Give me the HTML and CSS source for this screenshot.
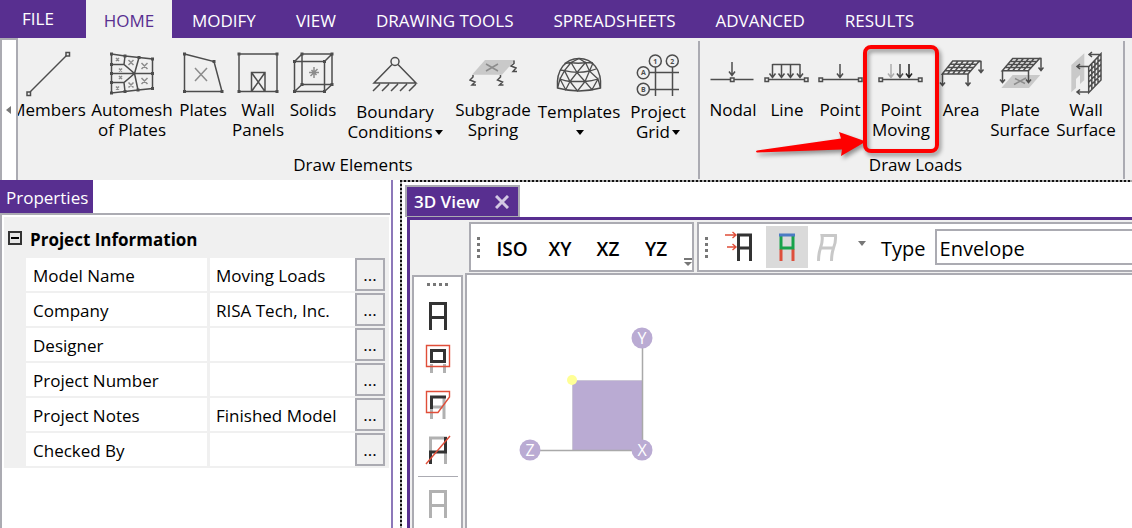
FILE: index.html
```html
<!DOCTYPE html>
<html lang="en">
<head>
<meta charset="utf-8">
<meta name="viewport" content="width=device-width, initial-scale=1">
<title>3D View</title>
<link rel="stylesheet" href="styles.css">
</head>
<body>
<svg class="defs" aria-hidden="true">
  <defs>
    <symbol id="down" viewBox="0 0 8 16" overflow="visible"><path d="M4 0V13M1 9.500L4 13.500L7 9.500"/></symbol>
    <symbol id="frame-a" viewBox="0 0 31 45"><path d="M8.500 37V10.500H23.500V37M8.500 24.500H23.500"/></symbol>
  </defs>
</svg>
<div class="app">
  <nav class="tabs" aria-label="Ribbon tabs">
    <button class="tab tab-file">FILE</button>
    <button class="tab tab-home active">HOME</button>
    <button class="tab">MODIFY</button>
    <button class="tab">VIEW</button>
    <button class="tab">DRAWING TOOLS</button>
    <button class="tab">SPREADSHEETS</button>
    <button class="tab">ADVANCED</button>
    <button class="tab">RESULTS</button>
  </nav>

  <div class="ribbon">
    <button class="ribbon-scroll" aria-label="Scroll ribbon left"><svg width="6" height="8" viewBox="0 0 6 8"><path d="M5 0V8L0 4Z"/></svg></button>

    <section class="group group-elements">
      <div class="tools tools-elements">
        <button class="tool">
          <svg class="icon" viewBox="0 0 48 48"><path d="M6 42L42.500 5.500"/><path class="node" d="M3 42h3.500v3.500H3zM42 2.500h3.500V6H42z"/></svg>
          <span class="label">Members</span>
        </button>
        <button class="tool">
          <svg class="icon" viewBox="0 0 48 48"><path d="M3.500 4L17 6L31 7.500L44.500 9V38.500L30 40L17 41.500L3.500 43ZM3.500 23.500H44.500M3.500 14.500H16L26.500 23.500L16 32.500H3.500M17 6L16 14.500M31 7.500L26.500 23.500L30 40M16 32.500L17 41.500"/><path class="dots" d="M3.500 4h0M17 6h0M31 7.500h0M44.500 9h0M44.500 23.500h0M44.500 38.500h0M30 40h0M17 41.500h0M3.500 43h0M3.500 32.500h0M3.500 23.500h0M3.500 14.500h0"/><path class="soft" d="M8 8l3 3m0-3l-3 3M20.500 10l5 5m0-5l-5 5M33.500 13l6 6m0-6l-6 6M11 18.500l3 3m0-3l-3 3M11 26l3 3m0-3l-3 3M8 36.500l3 3m0-3l-3 3M20.500 32.500l5 5m0-5l-5 5M33.500 28l6 6m0-6l-6 6"/></svg>
          <span class="label">Automesh<br>of Plates</span>
        </button>
        <button class="tool">
          <svg class="icon" viewBox="0 0 48 48"><path d="M5.500 4L35 11.500L43 41.500H5.500Z"/><path class="dots" d="M5.500 4h0M35 11.500h0M43 41.500h0M5.500 41.500h0"/><path class="soft" d="M16 18l12 13M28 18L16 31"/></svg>
          <span class="label">Plates</span>
        </button>
        <button class="tool">
          <svg class="icon" viewBox="0 0 48 48"><path d="M5 4H43V41.500H5ZM17.500 41.500V22.500H31V41.500M17.500 22.500L31 41.500M31 22.500L17.500 41.500"/><path class="dots" d="M5 4h0M43 4h0M43 41.500h0M5 41.500h0"/></svg>
          <span class="label">Wall<br>Panels</span>
        </button>
        <button class="tool">
          <svg class="icon" viewBox="0 0 48 48"><path d="M5.500 11.500H35.500V41.500H5.500ZM13 4H43V34.500H13ZM5.500 11.500L13 4M35.500 11.500L43 4M35.500 41.500L43 34.500M5.500 41.500L13 34.500"/><path class="dots" d="M5.500 11.500h0M35.500 11.500h0M35.500 41.500h0M5.500 41.500h0M13 4h0M43 4h0M43 34.500h0M13 34.500h0"/><path class="soft" d="M25 17v11M20 22.500h10M21.500 26l7-7M22.500 20l5 5"/></svg>
          <span class="label">Solids</span>
        </button>
        <button class="tool drop">
          <svg class="icon" viewBox="0 0 48 48"><circle cx="24" cy="11.500" r="4"/><path d="M21 14.500L3 33H45L27 14.500M9 34l-7 7M18 34l-7 7M27 34l-7 7M36 34l-7 7M45 34l-7 7"/></svg>
          <span class="label">Boundary<br>Conditions<i class="caret"></i></span>
        </button>
        <button class="tool">
          <svg class="icon" viewBox="0 0 48 48"><path class="plate" d="M16 10H46L33 24.700H3Z"/><path class="soft" d="M17 14l12 7M29 14l-12 7"/><path d="M4 25v2L1 30l5 2-3 3h4M31.500 25v2L28.500 30l5 2-3 3h4M45 10.500v3L42 16l5 2-3 3.500h4"/></svg>
          <span class="label">Subgrade<br>Spring</span>
        </button>
        <button class="tool drop">
          <svg class="icon" viewBox="0 0 48 48"><path d="M2.500 38C1 19 11 8.500 24 8.500S47 19 45.500 38Q24 44 2.500 38Z"/><path class="thin" d="M2.500 38L5 29L10.700 39.700L15 31.500L22.500 41L30 31.500L37 39.700L43 29L45.500 38M5 29Q10 31 15 31.500H30Q37 31 43 29M5 29L9.500 20.700L15 31.500L22 22.500L30 31.500L34.500 21L43 29M9.500 20.700Q22 24 34.500 21L41 19M9.500 20.700L16 12.500L22 22.500L30.500 12.500L34.500 21L38 13M9.500 13.500L16 12.500L24 8.500L30.500 12.500L38 13M16 12.500Q23 14 30.500 12.500M5 20L9.500 20.700"/></svg>
          <span class="label">Templates<br><i class="caret"></i></span>
        </button>
        <button class="tool drop">
          <svg class="icon" viewBox="0 0 48 48"><circle cx="21.300" cy="11" r="6"/><circle cx="38.300" cy="11" r="6"/><circle cx="9.300" cy="22.700" r="6"/><circle cx="9.300" cy="39.300" r="6"/><path d="M21.500 17V46M38.500 17V46M15.500 22.500H45M15.500 39.500H45"/><g class="marks"><text x="21.300" y="13.500">1</text><text x="38.300" y="13.500">2</text><text x="9.300" y="25.200">A</text><text x="9.300" y="41.800">B</text></g></svg>
          <span class="label">Project<br>Grid<i class="caret"></i></span>
        </button>
      </div>
      <h2 class="group-title">Draw Elements</h2>
    </section>

    <section class="group group-loads">
      <div class="tools tools-loads">
        <button class="tool">
          <svg class="icon" viewBox="0 0 48 48"><path d="M1.500 29.500H21M25 29.500H44.500"/><path class="node" d="M21.500 28h3.500v3.500h-3.500z"/><use href="#down" x="19" y="12" width="8" height="16"/></svg>
          <span class="label">Nodal</span>
        </button>
        <button class="tool">
          <svg class="icon" viewBox="0 0 48 48"><path d="M5 29.500H42M9.500 14.500H37"/><path class="node" d="M2 28h3.500v3.500H2zM41.500 28H45v3.500h-3.500z"/><use href="#down" x="5.500" y="14" width="8" height="16"/><use href="#down" x="14.500" y="14" width="8" height="16"/><use href="#down" x="23.500" y="14" width="8" height="16"/><use href="#down" x="33" y="14" width="8" height="16"/></svg>
          <span class="label">Line</span>
        </button>
        <button class="tool">
          <svg class="icon" viewBox="0 0 48 48"><path d="M6 29.500H43"/><path class="node" d="M3 28h3.500v3.500H3zM42.500 28H46v3.500h-3.500z"/><use href="#down" x="20" y="14" width="8" height="16"/></svg>
          <span class="label">Point</span>
        </button>
        <button class="tool marked">
          <svg class="icon" viewBox="0 0 48 48"><path d="M5 29.500H42"/><path class="node" d="M2 28h3.500v3.500H2zM41.500 28H45v3.500h-3.500z"/><use class="faded" href="#down" x="10" y="14" width="8" height="16"/><use href="#down" x="19" y="14" width="8" height="16"/><use class="dark" href="#down" x="28" y="14" width="8" height="16"/></svg>
          <span class="label">Point<br>Moving</span>
          <svg class="callout" viewBox="0 0 190 120" aria-hidden="true"><rect x="111" y="7" width="72" height="104" rx="6"/><path d="M3 110.500L87 98.500L85 92L112 101.500L87 116L88 109.500L3 112.500Q1 111.500 3 110.500Z"/></svg>
        </button>
        <button class="tool">
          <svg class="icon" viewBox="0 0 48 48"><path d="M15.700 11H42.300L31 24H5.300ZM13.100 14.250H39.500M10.500 17.500H36.700M7.900 20.750H33.900M21 11L10.500 24M26.300 11L15.600 24M31.600 11L20.700 24M37 11L25.900 24"/><path d="M42 11.500H44V22M41.500 19.500L44 22.500L46.500 19.500M5.500 24V35M3 32.500L5.500 35.500L8 32.500M31 24V35M28.500 32.500L31 35.500L33.500 32.500"/></svg>
          <span class="label">Area</span>
        </button>
        <button class="tool">
          <svg class="icon" viewBox="0 0 48 48"><path class="plate" d="M16.700 25H44.300L33 38H5.300Z"/><path class="soft" d="M19 28.500l10 5M30 28l-12 6.500"/><path d="M16.700 8.500H43.500L32.300 20.700H6.300ZM14.100 11.500H40.700M11.500 14.600H37.900M8.900 17.600H35.100M22 8.500L11.500 20.700M27.400 8.500L16.700 20.700M32.700 8.500L21.900 20.700M38.100 8.500L27.100 20.700"/><path d="M43 8.500H45V20M42.500 17.500L45 20.500L47.500 17.500M6.500 20.700V32M4 29.500L6.500 32.500L9 29.500M32.500 20.700V32M30 29.500L32.500 32.500L35 29.500"/></svg>
          <span class="label">Plate<br>Surface</span>
        </button>
        <button class="tool">
          <svg class="icon" viewBox="0 0 48 48"><path class="plate" d="M9.300 15L22.300 3.300V30L18 34V25L14 29V38L9.300 42.300Z"/><path d="M26.700 16.700L39 3.700V30L26.700 42.700ZM29.800 13.500V39.500M32.900 10.200V36.300M36 7V33.100M26.700 21.900L39 9M26.700 27.100L39 14.200M26.700 32.300L39 19.500M26.700 37.500L39 24.700M39 4.500H27M30 2L27 4.500L30 7M26.700 16.500H15M18 14L15 16.500L18 19M26.700 42H15M18 39.500L15 42L18 44.500"/></svg>
          <span class="label">Wall<br>Surface</span>
        </button>
      </div>
      <h2 class="group-title">Draw Loads</h2>
    </section>
  </div>

  <main class="workspace">
    <aside class="properties">
      <h2 class="panel-tab">Properties</h2>
      <div class="panel-frame">
        <div class="panel-sheet">
          <h3 class="section"><button class="expander" aria-label="Collapse Project Information"></button>Project Information</h3>
          <table class="props">
            <colgroup><col class="col-name"><col><col class="col-more"></colgroup>
            <tr><th scope="row">Model Name</th><td>Moving Loads</td><td class="more"><button aria-label="Edit Model Name">...</button></td></tr>
            <tr><th scope="row">Company</th><td>RISA Tech, Inc.</td><td class="more"><button aria-label="Edit Company">...</button></td></tr>
            <tr><th scope="row">Designer</th><td></td><td class="more"><button aria-label="Edit Designer">...</button></td></tr>
            <tr><th scope="row">Project Number</th><td></td><td class="more"><button aria-label="Edit Project Number">...</button></td></tr>
            <tr><th scope="row">Project Notes</th><td>Finished Model</td><td class="more"><button aria-label="Edit Project Notes">...</button></td></tr>
            <tr><th scope="row">Checked By</th><td></td><td class="more"><button aria-label="Edit Checked By">...</button></td></tr>
          </table>
        </div>
      </div>
    </aside>

    <section class="dock">
      <div class="dock-inner">
        <div class="view-tab">3D View<button class="close" aria-label="Close 3D View"><svg width="14" height="14" viewBox="0 0 14 14"><path d="M1 1L13 13M13 1L1 13"/></svg></button></div>
        <div class="view">
          <div class="toolbars">
            <div class="toolbar toolbar-views">
              <span class="grip"></span>
              <button class="view-btn">ISO</button>
              <button class="view-btn">XY</button>
              <button class="view-btn">XZ</button>
              <button class="view-btn">YZ</button>
              <svg class="overflow" width="8" height="8" viewBox="0 0 8 8"><path d="M0 0H8V2H0ZM0 4H8L4 8Z"/></svg>
            </div>
            <div class="toolbar toolbar-results">
              <span class="grip"></span>
              <button class="pic" aria-label="Loads"><svg width="42" height="42" viewBox="0 0 42 42"><path class="ink" d="M14.500 35V9H26.500V35M14.500 22H26.500"/><path class="red" d="M1 9H12M8.500 6L12 9L8.500 12M3 21H12M8.500 18L12 21L8.500 24"/></svg></button>
              <button class="pic pressed" aria-label="Member colors"><svg width="42" height="42" viewBox="0 0 42 42"><path class="r" d="M15 23V35M27 23V35"/><path class="g" d="M15 9V22H27V9"/><path class="b" d="M13 9H29"/></svg></button>
              <button class="pic" aria-label="Deflected shape"><svg width="42" height="42" viewBox="0 0 42 42"><path class="mute" d="M10.500 35Q10.500 28 12.500 22Q15 15 14 9.500H27.500Q28 16 25.500 22Q23.500 28 23.500 35M12.500 22H25.500"/></svg></button>
              <svg class="menu" width="8" height="5" viewBox="0 0 8 5"><path d="M0 0H8L4 5Z"/></svg>
              <label class="type-label" for="type">Type</label>
              <select class="type-select" id="type"><option>Envelope</option></select>
            </div>
          </div>
          <div class="stage">
            <div class="sidebar">
              <span class="grip grip-wide"></span>
              <button class="side" aria-label="Select all"><svg width="31" height="45"><use class="ink" href="#frame-a"/></svg></button>
              <button class="side" aria-label="Box select"><svg width="31" height="45"><path class="gray" d="M9.500 26V35M22.500 26V35"/><path class="ink" d="M9.500 12.500H22.500V23.500H9.500Z"/><path class="red" d="M4.500 7.500H27.500V28.500H4.500Z"/></svg></button>
              <button class="side" aria-label="Polygon select"><svg width="31" height="45"><path class="gray" d="M9.500 26V36M22 14V36M11 24H22"/><path class="ink" d="M9.500 26V14H24"/><path class="red" d="M4.500 8.500H27.500V14L16 29.500H4.500Z"/></svg></button>
              <button class="side" aria-label="Line select"><svg width="31" height="45"><path class="gray" d="M8.500 24V10H23.500V36"/><path class="ink" d="M8.500 36V24H23.500V9"/><path class="red" d="M4 36L28 8"/></svg></button>
              <hr>
              <button class="side" aria-label="Unselect all"><svg width="31" height="45"><use class="gray" href="#frame-a"/></svg></button>
            </div>
            <div class="canvas">
              <svg class="gizmo" width="136" height="136" viewBox="0 0 136 136" role="img" aria-label="Axis orientation">
                <path class="face" d="M53 53H123V123H53Z"/>
                <path class="edge" d="M53.500 123V53.500H123"/>
                <path class="axis" d="M123.500 11V123.500H11"/>
                <circle class="knob" cx="123" cy="11" r="10.500"/><circle class="knob" cx="11" cy="123" r="10.500"/><circle class="knob" cx="123" cy="123" r="10.500"/>
                <circle class="origin" cx="53" cy="53" r="5"/>
                <text x="123" y="17">Y</text><text x="11" y="129">Z</text><text x="123" y="129">X</text>
              </svg>
            </div>
          </div>
        </div>
      </div>
    </section>
  </main>
</div>
</body>
</html>
```
FILE: styles.css
```css
:root {
  --purple: #582f90;
  --line: #ababb2;
  --panel: #f0f0f0;
}
* { box-sizing: border-box; }
body {
  margin: 0;
  font: 17px/20px "Open Sans", "Noto Sans", sans-serif;
  color: #000;
  background: #fff;
  overflow: hidden;
}
button {
  font: inherit;
  color: inherit;
  background: none;
  border: 0;
  padding: 0;
}
h2, h3 { margin: 0; font: inherit; }
svg { display: block; }
.defs { position: absolute; width: 0; height: 0; }
.app { display: flex; flex-direction: column; height: 100vh; }

/* Tab strip */
.tabs { display: flex; height: 38px; background: var(--purple); flex: none; }
.tab { padding: 4px 20px 0; color: #fff; white-space: nowrap; }
.tab-file, .tab-home { width: 86px; padding: 4px 0 0; }
.tab-file { padding: 0 10px 0 0; }
.active { background: var(--panel); color: var(--purple); }

/* Ribbon */
.ribbon { display: flex; height: 142px; background: var(--panel); flex: none; }
.ribbon-scroll {
  width: 18px;
  flex: none;
  display: grid;
  place-items: center;
  background: #fff;
  border: 2px solid var(--line);
  border-bottom: 0;
}
.ribbon-scroll path { fill: #777; }
.group {
  position: relative;
  display: flex;
  flex-direction: column;
  padding-top: 12px;
  flex: none;
}
.group::after {
  content: "";
  position: absolute;
  top: 3px;
  right: 0;
  bottom: 1px;
  width: 2px;
  background: var(--line);
}
.group-elements { width: 682px; padding-right: 6px; }
.group-loads { width: 425px; padding-left: 6px; }
.tools { display: grid; height: 105px; }
.tools-elements {
  grid-template-columns: 80px 88px 54px 56px 54px 110px 86px 86px 72px;
  justify-content: end;
  overflow: hidden;
}
.tools-loads { grid-template-columns: 54px 54px 52px 70px 50px 68px 64px; }
.tool {
  position: relative;
  display: flex;
  flex-direction: column;
  align-items: center;
  white-space: nowrap;
}
.icon {
  width: 48px;
  height: 48px;
  flex: none;
  fill: none;
  stroke: #4d4d4d;
  stroke-width: 1.5;
}
.icon .dots { stroke-width: 3; stroke-linecap: square; }
.icon .node { fill: var(--panel); }
.icon .soft { stroke: #8c8c8c; }
.icon .plate { fill: #c9c9c9; stroke: none; }
.icon .thin { stroke-width: 1.3; }
.icon .faded { stroke: #adadad; }
.icon .dark { stroke: #222; }
.marks text {
  font: bold 7px "Open Sans", sans-serif;
  fill: #4d4d4d;
  stroke: none;
  text-anchor: middle;
}
.label { padding-top: 2px; }
.drop .label { padding-top: 4px; }
.caret {
  display: inline-block;
  border: 4px solid transparent;
  border-top: 5px solid #000;
  border-bottom: 0;
  margin-left: 2px;
  vertical-align: 3px;
}
.callout {
  position: absolute;
  z-index: 1;
  top: -10px;
  right: -8px;
  width: 190px;
  height: 120px;
  pointer-events: none;
  filter: drop-shadow(2px 3px 2px rgba(0, 0, 0, .4));
}
.callout rect { fill: none; stroke: #fe0000; stroke-width: 4; }
.callout path { fill: #fe0000; }
.group-title { text-align: center; }
.group-elements .group-title { padding-right: 6px; }

/* Properties panel */
.workspace { display: flex; flex: 1; min-height: 0; }
.properties {
  width: 393px;
  flex: none;
  display: flex;
  flex-direction: column;
  align-items: flex-start;
  border-right: 2px solid #8d78b9;
}
.panel-tab {
  height: 33px;
  padding: 8px 5px 0 6px;
  color: #fff;
  background: var(--purple);
}
.panel-frame {
  flex: 1;
  width: 390px;
  padding: 2px 1px 0 2px;
  border: solid var(--line);
  border-width: 2px 0 0 2px;
}
.panel-sheet { background: var(--panel); padding: 0 4px 2px 22px; }
.section {
  display: flex;
  align-items: center;
  gap: 8px;
  height: 41px;
  margin-left: -18px;
  padding-top: 4px;
  font-weight: 700;
}
.expander {
  width: 14px;
  height: 14px;
  margin-top: -3px;
  border: 2px solid #333;
  background: linear-gradient(#000, #000) center / 8px 2px no-repeat #e6e6e6;
}
.props {
  width: 100%;
  table-layout: fixed;
  border-collapse: separate;
  border-spacing: 0;
}
.col-name { width: 184px; }
.col-more { width: 30px; }
.props th, .props td {
  height: 35px;
  padding: 3px 6px 0;
  background: #fff;
  border-bottom: 2px solid var(--panel);
  text-align: left;
  font-weight: 400;
  white-space: nowrap;
}
.props th { padding-left: 7px; border-right: 3px solid var(--panel); }
.props tr:last-child > * { height: 33px; border-bottom: 0; }
.props .more { padding: 0; }
.more button {
  display: block;
  width: 30px;
  height: 33px;
  border: 2px solid var(--line);
  background: var(--panel);
}

/* 3D view */
.dock {
  flex: 1;
  min-width: 0;
  margin-left: 7px;
  padding: 2px 0 0 2px;
  background:
    repeating-linear-gradient(90deg, #111 0 2px, #aaa 2px 4px) 0 0 / 100% 2px no-repeat,
    repeating-linear-gradient(#111 0 2px, #aaa 2px 4px) 0 0 / 2px 100% no-repeat;
}
.dock-inner {
  height: 100%;
  padding: 3px 0 0 5px;
  display: flex;
  flex-direction: column;
  background: #fff;
}
.view-tab {
  display: flex;
  align-items: center;
  align-self: flex-start;
  gap: 15px;
  height: 32px;
  margin-left: -2px;
  padding: 0 9px 0 7px;
  border: 2px solid var(--line);
  border-bottom-width: 1px;
  background: var(--purple);
  color: #fff;
  font-weight: 600;
}
.close path { stroke: #d3c8e3; stroke-width: 3; }
.view {
  flex: 1;
  min-height: 0;
  display: flex;
  flex-direction: column;
  border: solid var(--purple);
  border-width: 3px 0 0 3px;
  background: var(--panel);
}
.toolbars { display: flex; gap: 3px; padding: 2px 0 1px 59px; font-size: 20px; }
.toolbar {
  position: relative;
  display: flex;
  align-items: center;
  height: 50px;
  border: 2px solid var(--line);
  background: #fff;
}
.toolbar-views { width: 225px; padding-left: 6px; flex: none; }
.toolbar-results { flex: 1; padding-left: 6px; border-right: 0; min-width: 0; }
.grip {
  width: 3px;
  height: 21px;
  flex: none;
  background: repeating-linear-gradient(#777 0 3px, transparent 3px 6px);
}
.view-btn { width: 48px; height: 46px; padding-top: 3px; font-weight: 600; font-size: 19px; }
.grip + .view-btn { margin-left: 8px; }
.overflow { position: absolute; right: 0; bottom: 4px; fill: #777; }
.pic { flex: none; }
.pic svg, .side svg { fill: none; }
.grip + .pic { margin-left: 16px; }
.pressed { background: #dadada; }
.pic path { stroke-width: 3; }
.ink { stroke: #333; stroke-width: 3; }
.gray { stroke: #b1b1b1; stroke-width: 3; }
.pic .red, .side .red { stroke: #e04e39; stroke-width: 1.4; }
.r { stroke: #de4f3c; }
.g { stroke: #18a24b; }
.b { stroke: #4b7bc4; }
.mute { stroke: #c8c8c8; }
.menu { margin: 0 15px 8px 8px; fill: #777; flex: none; }
.type-label { padding-top: 4px; margin-right: 9px; }
.type-select {
  flex: 1;
  min-width: 0;
  height: 36px;
  padding: 3px 3px 0;
  appearance: none;
  font: inherit;
  color: #000;
  background: #fff;
  border: 2px solid var(--line);
  border-right: 0;
  border-radius: 0;
}
.stage { flex: 1; min-height: 0; display: flex; gap: 2px; }
.sidebar {
  width: 51px;
  margin: 2px 0 0 2px;
  display: flex;
  flex-direction: column;
  align-items: center;
  flex: none;
  border: 2px solid var(--line);
  border-bottom: 0;
  overflow: hidden;
  background: #fff;
}
.grip-wide {
  width: 21px;
  height: 3px;
  margin: 6px 0 7px;
  background: repeating-linear-gradient(90deg, #777 0 3px, transparent 3px 6px);
}
.side { flex: none; }
.sidebar hr { width: 40px; height: 1px; margin: 3px 0 4px; border: 0; background: var(--line); flex: none; }
.canvas {
  flex: 1;
  min-width: 0;
  padding: 52px;
  border: solid var(--line);
  border-width: 2px 0 0 2px;
  background: #fff;
  overflow: hidden;
}
.face { fill: #baabd3; }
.edge { fill: none; stroke: #cbc5d6; }
.axis { fill: none; stroke: #a9a9a9; stroke-width: 1.5; }
.knob { fill: #baabd3; }
.origin { fill: #ffff96; }
.gizmo text { font: 16px "Open Sans", sans-serif; fill: #fff; text-anchor: middle; }
```
